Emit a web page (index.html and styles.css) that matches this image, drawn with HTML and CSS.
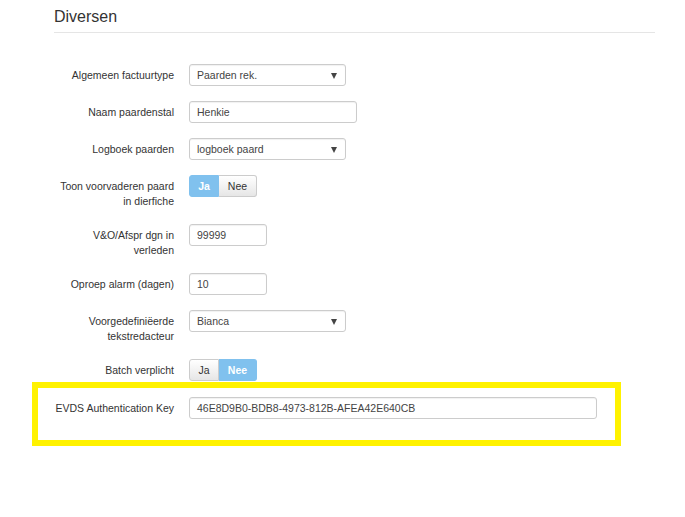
FILE: index.html
```html
<!DOCTYPE html>
<html>
<head>
<meta charset="utf-8">
<link rel="stylesheet" href="styles.css">
</head>
<body>
<div class="page">
  <h2 class="title">Diversen</h2>
  <div class="rule"></div>
  <form class="form">
    <div class="row">
      <label class="lbl">Algemeen factuurtype</label>
      <div class="sel w157"><span class="val">Paarden rek.</span></div>
    </div>
    <div class="row">
      <label class="lbl">Naam paardenstal</label>
      <div class="inp w168">Henkie</div>
    </div>
    <div class="row">
      <label class="lbl">Logboek paarden</label>
      <div class="sel w157"><span class="val">logboek paard</span></div>
    </div>
    <div class="row">
      <label class="lbl">Toon voorvaderen paard in dierfiche</label>
      <div class="toggle"><span class="tb ja on">Ja</span><span class="tb nee">Nee</span></div>
    </div>
    <div class="row">
      <label class="lbl">V&amp;O/Afspr dgn in verleden</label>
      <div class="inp w78">99999</div>
    </div>
    <div class="row">
      <label class="lbl">Oproep alarm (dagen)</label>
      <div class="inp w78">10</div>
    </div>
    <div class="row">
      <label class="lbl">Voorgedefiniëerde tekstredacteur</label>
      <div class="sel w157"><span class="val">Bianca</span></div>
    </div>
    <div class="row">
      <label class="lbl">Batch verplicht</label>
      <div class="toggle"><span class="tb ja">Ja</span><span class="tb nee on">Nee</span></div>
    </div>
    <div class="highlight">
      <div class="row last">
        <label class="lbl nowrap">EVDS Authentication Key</label>
        <div class="inp w408">46E8D9B0-BDB8-4973-812B-AFEA42E640CB</div>
      </div>
    </div>
  </form>
</div>
</body>
</html>
```
FILE: styles.css
```css
* { box-sizing: border-box; }
html, body { margin: 0; padding: 0; background: #fff; }
body {
  font-family: "Liberation Sans", Arial, sans-serif;
  font-size: 10.5px;
  color: #333;
  width: 685px;
  height: 517px;
  overflow: hidden;
}
.page {
  padding: 7px 30px 0 54px;
}
.title {
  margin: 0;
  font-size: 16px;
  font-weight: normal;
  line-height: 20px;
  color: #333;
}
.rule {
  margin-top: 5px;
  width: 601px;
  height: 1px;
  background: #e5e5e5;
}
.form {
  margin-top: 31px;
}
.row {
  display: flex;
  align-items: flex-start;
  gap: 15px;
  margin-bottom: 15px;
}
.lbl {
  width: 120px;
  flex: none;
  text-align: right;
  line-height: 15px;
  padding-top: 4px;
  color: #333;
}
.nowrap { white-space: nowrap; }
.inp, .sel {
  height: 22px;
  border: 1px solid #ccc;
  border-radius: 3px;
  line-height: 20px;
  padding: 0 7px;
  color: #444;
  background: #fff;
  box-shadow: inset 0 1px 1px rgba(0,0,0,0.06);
}
.sel { position: relative; }
.sel::after {
  content: "";
  position: absolute;
  right: 8px;
  top: 8px;
  border-left: 3px solid transparent;
  border-right: 3px solid transparent;
  border-top: 6px solid #444;
}
.w157 { width: 157px; }
.w168 { width: 168px; }
.w78 { width: 78px; }
.w408 { width: 408px; }
.toggle {
  display: flex;
  height: 22px;
}
.tb {
  display: flex;
  align-items: center;
  justify-content: center;
  height: 22px;
  border: 1px solid #ccc;
  background: linear-gradient(#fff, #e6e6e6);
  color: #333;
}
.tb.ja { width: 30px; border-radius: 3px 0 0 3px; }
.tb.nee { width: 38px; border-radius: 0 3px 3px 0; border-left: 0; }
.tb.on {
  background: #80c1ee;
  border-color: #80c1ee;
  color: #fff;
  font-weight: bold;
}
.highlight {
  margin: -14px 0 0 -22px;
  width: 589px;
  border: 6px solid #fff200;
  padding: 9px 0 6px 16px;
}
.row.last { margin-bottom: 15px; }
```
